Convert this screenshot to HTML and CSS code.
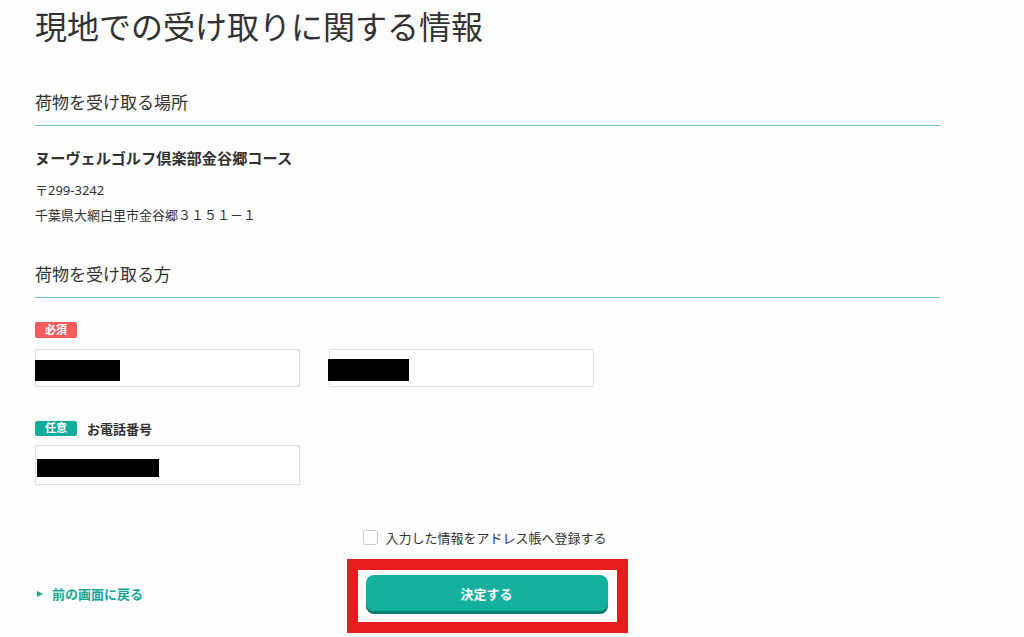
FILE: index.html
```html
<!DOCTYPE html>
<html lang="ja">
<head>
<meta charset="utf-8">
<title>現地での受け取りに関する情報</title>
<link rel="stylesheet" href="styles.css">
</head>
<body>
<main class="page">
  <h1 class="title">現地での受け取りに関する情報</h1>

  <section class="sec">
    <h2 class="sec-head">荷物を受け取る場所</h2>
    <p class="venue">ヌーヴェルゴルフ倶楽部金谷郷コース</p>
    <p class="postal">〒299-3242</p>
    <p class="addr">千葉県大網白里市金谷郷３１５１－１</p>
  </section>

  <section class="sec">
    <h2 class="sec-head sec-head-2">荷物を受け取る方</h2>

    <div class="field field-name">
      <div class="label-row"><span class="badge badge-req">必須</span></div>
      <div class="input-row">
        <div class="input"><span class="redact redact-1"></span></div>
        <div class="input"><span class="redact redact-2"></span></div>
      </div>
    </div>

    <div class="field field-tel">
      <div class="label-row"><span class="badge badge-opt">任意</span><span class="label">お電話番号</span></div>
      <div class="input-row">
        <div class="input input-tel"><span class="redact redact-3"></span></div>
      </div>
    </div>
  </section>

  <div class="actions">
    <label class="check-row"><span class="checkbox"></span><span class="check-text">入力した情報をアドレス帳へ登録する</span></label>
    <div class="bottom-row">
      <a class="back" href="#"><span class="tri"></span>前の画面に戻る</a>
      <div class="btn-wrap">
        <button class="submit" type="button">決定する</button>
        <span class="highlight"></span>
      </div>
    </div>
  </div>
</main>
</body>
</html>
```

FILE: styles.css
```css
* { box-sizing: border-box; }
html, body { margin: 0; padding: 0; }
body {
  background: #fdfdfd;
  color: #333;
  font-family: "Noto Sans", "Noto Sans CJK JP", sans-serif;
  width: 1024px;
  height: 637px;
  overflow: hidden;
}
.page {
  padding: 7px 0 0 35px;
  width: 940px;
}
.title {
  margin: 0;
  font-size: 32px;
  line-height: 40px;
  font-weight: 400;
  color: #333;
}
.sec-head {
  margin: 44px 0 0;
  font-size: 17px;
  line-height: 24px;
  font-weight: 400;
  padding-bottom: 10px;
  border-bottom: 1px solid #6cc6bc;
}
.sec-head-2 { margin-top: 38px; }
.venue {
  margin: 21px 0 0;
  font-size: 15.2px;
  line-height: 22px;
  font-weight: 700;
}
.postal, .addr {
  margin: 11px 0 0;
  font-size: 13px;
  line-height: 20px;
}
.addr { margin-top: 5px; }

.field-name { margin-top: 24px; }
.field-tel { margin-top: 33px; }
.label-row {
  display: flex;
  align-items: center;
  gap: 10px;
  height: 16px;
}
.badge {
  display: inline-flex;
  align-items: center;
  justify-content: center;
  width: 42px;
  height: 16px;
  border-radius: 2px;
  color: #fff;
  font-size: 11px;
  font-weight: 700;
  line-height: 16px;
}
.badge-req { background: #f45b5b; }
.badge-opt { background: #14ad9a; height: 15px; }
.label {
  font-size: 13px;
  font-weight: 700;
  color: #333;
}
.input-row {
  display: flex;
  gap: 29px;
  margin-top: 11px;
}
.field-tel .input-row { margin-top: 9px; }
.input {
  width: 265px;
  height: 38px;
  border: 1px solid #dcdfe6;
  background: #fff;
  display: flex;
  align-items: center;
}
.input-tel { height: 40px; }
.redact {
  display: block;
  background: #000;
}
.redact-1 { width: 85px; height: 21px; margin-left: -1px; margin-top: 4px; }
.redact-2 { width: 81px; height: 22px; margin-left: -2px; margin-top: 3px; }
.redact-3 { width: 122px; height: 18px; margin-left: 1px; margin-top: 5px; }

.actions {
  margin-top: 42px;
  display: flex;
  flex-direction: column;
  align-items: center;
  position: relative;
}
.check-row {
  display: flex;
  align-items: center;
  gap: 7px;
  height: 20px;
  font-size: 13px;
  color: #333;
  margin-left: -5px;
}
.checkbox {
  width: 15px;
  height: 15px;
  border: 1px solid #c9c9c9;
  border-radius: 3px;
  background: #fff;
}
.bottom-row {
  width: 100%;
  margin-top: 28px;
  display: flex;
  justify-content: center;
  position: relative;
}
.back {
  position: absolute;
  left: 2px;
  top: 9px;
  display: flex;
  align-items: center;
  gap: 9px;
  color: #17a596;
  font-size: 13px;
  font-weight: 700;
  text-decoration: none;
  line-height: 20px;
}
.tri {
  width: 0;
  height: 0;
  border-left: 6px solid #17a596;
  border-top: 3.5px solid transparent;
  border-bottom: 3.5px solid transparent;
}
.btn-wrap {
  position: relative;
  margin-left: -2px;
}
.submit {
  display: block;
  width: 242px;
  height: 36px;
  border: 0;
  border-radius: 8px;
  background: #14b09e;
  box-shadow: 0 3px 0 #0d7b6e;
  color: #fff;
  font-family: inherit;
  font-size: 13px;
  font-weight: 700;
  cursor: pointer;
}
.highlight {
  position: absolute;
  left: -19px;
  top: -16px;
  right: -20px;
  bottom: -22px;
  border: 11px solid #e61c1f;
  pointer-events: none;
}
```
